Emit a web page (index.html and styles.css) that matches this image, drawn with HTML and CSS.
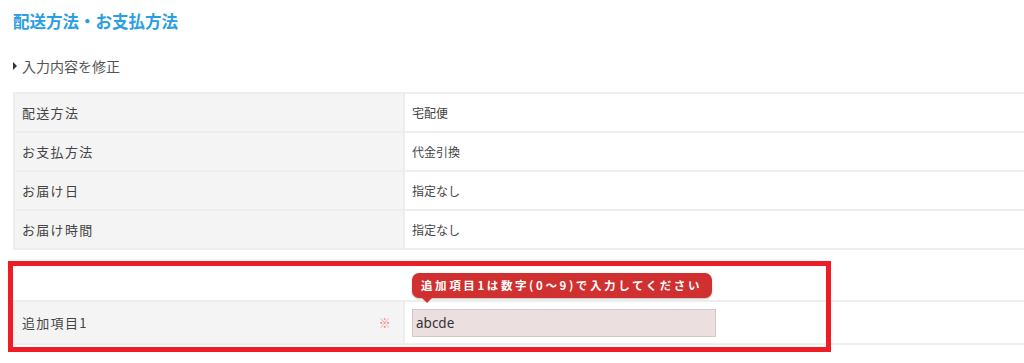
FILE: index.html
```html
<!DOCTYPE html>
<html lang="ja">
<head>
    <meta charset="UTF-8">
    <meta name="viewport" content="width=device-width, initial-scale=1.0">
    <title>配送方法・お支払方法</title>
    <link rel="stylesheet" href="styles.css">
</head>
<body>
    <main class="page">
        <h2 class="page-title">配送方法・お支払方法</h2>

        <a class="edit-link" href="#">入力内容を修正</a>

        <table class="confirm-table">
            <tr>
                <th>配送方法</th>
                <td>宅配便</td>
            </tr>
            <tr>
                <th>お支払方法</th>
                <td>代金引換</td>
            </tr>
            <tr>
                <th>お届け日</th>
                <td>指定なし</td>
            </tr>
            <tr>
                <th>お届け時間</th>
                <td>指定なし</td>
            </tr>
        </table>

        <div class="extra-block">
            <table class="confirm-table extra-table">
                <tr>
                    <th>
                        <div class="label-row">
                            <span>追加項目1</span>
                            <span class="required">※</span>
                        </div>
                    </th>
                    <td>
                        <div class="field">
                            <span class="error-tip">追加項目1は数字(0〜9)で入力してください</span>
                            <input type="text" class="field-input" value="abcde">
                        </div>
                    </td>
                </tr>
            </table>
            <div class="highlight-box"></div>
        </div>
    </main>
</body>
</html>
```

FILE: styles.css
```css
html {
    overflow: hidden;
}

body {
    margin: 0;
    padding: 0;
    font-family: "Noto Sans CJK JP", "Noto Sans", sans-serif;
    color: #444;
    background: #fff;
}

.page {
    padding: 10px 0 20px 13px;
}

.page-title {
    margin: 0;
    font-size: 16.5px;
    font-weight: bold;
    line-height: 22px;
    color: #2a9ee2;
}

.edit-link {
    display: block;
    margin-top: 24px;
    padding-left: 9px;
    position: relative;
    font-size: 14px;
    line-height: 20px;
    color: #555;
    text-decoration: none;
}

.edit-link:before {
    content: "";
    position: absolute;
    left: 0;
    top: 6px;
    border-left: 4px solid #333;
    border-top: 4px solid transparent;
    border-bottom: 4px solid transparent;
}

.confirm-table {
    width: 1030px;
    margin-top: 16px;
    border-collapse: collapse;
}

.confirm-table th,
.confirm-table td {
    height: 37px;
    padding: 0 7px;
    border: 2px solid #eee;
    text-align: left;
    font-weight: normal;
    color: #444;
}

.confirm-table th {
    width: 374px;
    background: #f4f4f4;
    font-size: 13px;
    letter-spacing: 1.3px;
}

.confirm-table td {
    font-size: 12px;
}

.extra-block {
    position: relative;
    padding-top: 50px;
}

.extra-table {
    margin-top: 0;
}

.extra-table th,
.extra-table td {
    height: 41px;
}

.label-row {
    display: flex;
    justify-content: space-between;
    align-items: center;
    padding-right: 4px;
}

.required {
    color: #f77;
    font-size: 12px;
}

.field {
    position: relative;
    width: 304px;
}

.field-input {
    display: block;
    box-sizing: border-box;
    width: 304px;
    height: 28px;
    margin: 0;
    padding: 0 3px;
    border: 1px solid #d2c8c8;
    background: #ecdfdf;
    font-family: "Noto Sans", "Noto Sans CJK JP", sans-serif;
    font-size: 13.5px;
    color: #333;
}

.error-tip {
    position: absolute;
    left: 0;
    bottom: 39px;
    box-sizing: border-box;
    width: 300px;
    height: 25px;
    padding: 0 0 0 9px;
    border-radius: 7px;
    background: #d0302f;
    box-shadow: 0 1px 2px rgba(0, 0, 0, 0.25);
    color: #fff;
    font-size: 11.5px;
    font-weight: bold;
    line-height: 25px;
    letter-spacing: 2.6px;
    white-space: nowrap;
}

.error-tip:after {
    content: "";
    position: absolute;
    left: 10px;
    top: 100%;
    border-top: 5px solid #d0302f;
    border-left: 5px solid transparent;
    border-right: 5px solid transparent;
}

.highlight-box {
    position: absolute;
    left: -5px;
    top: 11px;
    width: 813px;
    height: 81px;
    border: 5px solid #ee1c25;
    pointer-events: none;
}
```
